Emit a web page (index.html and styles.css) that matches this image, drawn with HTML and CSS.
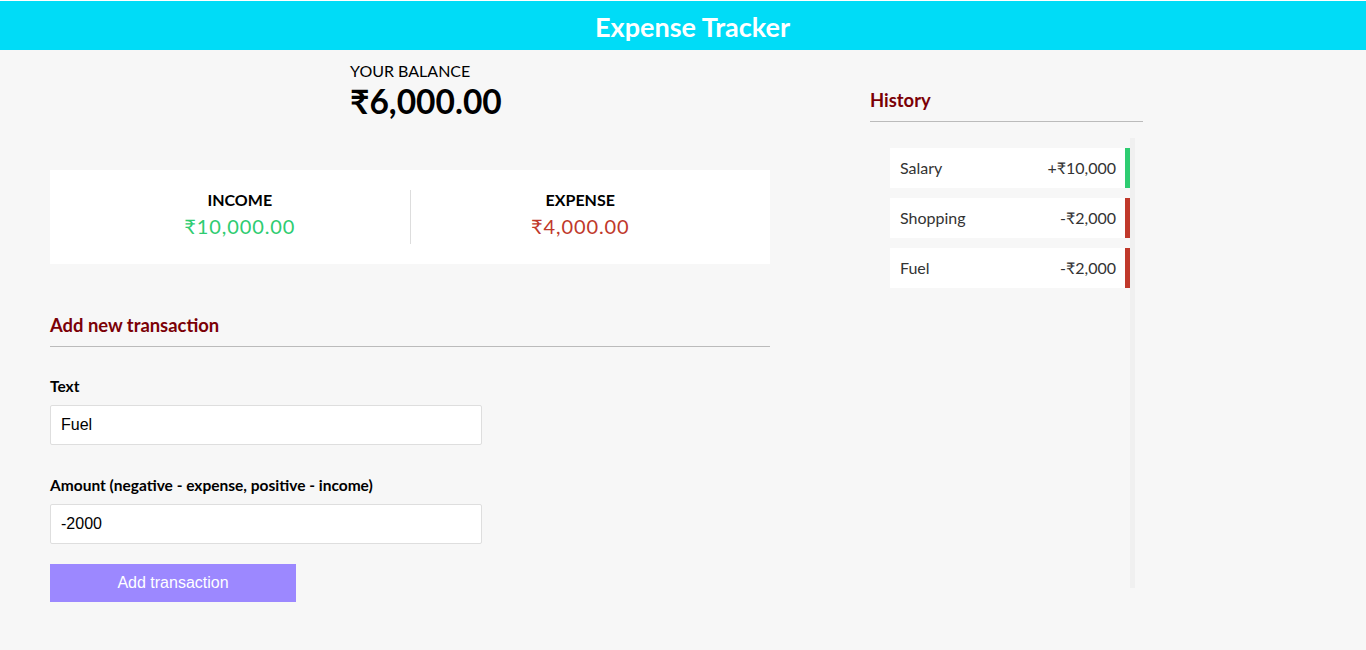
FILE: index.html
```html
<!DOCTYPE html>
<html>
<head>
<meta charset="utf-8">
<link rel="stylesheet" href="styles.css">
</head>
<body>
<header class="topbar"><h1 class="title">Expense Tracker</h1></header>
<main class="layout">
  <section class="left">
    <div class="balance">
      <h4 class="balance-label">YOUR BALANCE</h4>
      <div class="balance-amount">₹6,000.00</div>
    </div>
    <div class="inc-exp">
      <div class="ie-col">
        <h4 class="ie-label">INCOME</h4>
        <p class="money plus">₹10,000.00</p>
      </div>
      <div class="ie-col">
        <h4 class="ie-label">EXPENSE</h4>
        <p class="money minus">₹4,000.00</p>
      </div>
    </div>
    <h3 class="section-title">Add new transaction</h3>
    <form class="form">
      <div class="form-control">
        <label class="label">Text</label>
        <input class="input" type="text" value="Fuel">
      </div>
      <div class="form-control amount-control">
        <label class="label">Amount (negative - expense, positive - income)</label>
        <input class="input" type="text" value="-2000">
      </div>
      <button class="btn" type="button">Add transaction</button>
    </form>
  </section>
  <section class="right">
    <h3 class="section-title">History</h3>
    <ul class="list">
      <li class="item plus-item"><span>Salary</span><span>+₹10,000</span></li>
      <li class="item minus-item"><span>Shopping</span><span>-₹2,000</span></li>
      <li class="item minus-item"><span>Fuel</span><span>-₹2,000</span></li>
    </ul>
  </section>
</main>
</body>
</html>
```
FILE: styles.css
```css
* { box-sizing: border-box; }
html, body { margin: 0; padding: 0; }
body {
  background: #f7f7f7;
  font-family: Lato, "Open Sans", sans-serif;
  color: #000;
  border-top: 1px solid #fff;
}
.topbar {
  background: #00dcf7;
  height: 49px;
  display: flex;
  align-items: center;
  justify-content: center;
  padding-left: 19px;
}
.title {
  margin: 0;
  color: #fff;
  font-family: Lato, sans-serif;
  font-weight: 700;
  font-size: 27px;
  line-height: 30px;
  padding-top: 2px;
}
.layout {
  display: flex;
  padding-left: 50px;
}
.left { width: 720px; }
.right { width: 273px; margin-left: 100px; padding-top: 38px; }
.balance { margin-left: 300px; padding-top: 11px; }
.balance-label {
  margin: 0;
  font-size: 16px;
  font-weight: 400;
  line-height: 20px;
}
.balance-amount {
  font-size: 33.5px;
  font-weight: 700;
  line-height: 40px;
}
.inc-exp {
  margin-top: 49px;
  background: #fff;
  height: 94px;
  display: flex;
  align-items: center;
  padding: 0 20px;
}
.ie-col {
  flex: 1;
  text-align: center;
  height: 54px;
}
.ie-col:first-child { border-right: 1px solid #ddd; }
.ie-label {
  margin: 0;
  font-size: 16px;
  font-weight: 700;
  line-height: 20px;
}
.money {
  margin: 4px 0 0;
  font-size: 20px;
  line-height: 24px;
  letter-spacing: 0.9px;
}
.plus { color: #2ecc71; }
.minus { color: #c0392b; }
.section-title {
  margin: 0;
  color: #7b0006;
  font-size: 18.4px;
  font-weight: 700;
  line-height: 24px;
  padding-bottom: 9px;
  border-bottom: 1px solid #bbb;
}
.left .section-title { margin-top: 49px; }
.form {
  display: flex;
  flex-direction: column;
  align-items: flex-start;
  padding-top: 29px;
}
.form-control { margin-bottom: 20px; }
.amount-control { margin-top: 10px; }
.label {
  display: block;
  font-size: 15.5px;
  font-weight: 700;
  line-height: 20px;
  margin: 0 0 9px;
}
.input {
  display: block;
  width: 432px;
  height: 40px;
  border: 1px solid #dedede;
  border-radius: 2px;
  background: #fff;
  padding: 0 10px;
  font-family: "Liberation Sans", Arial, sans-serif;
  font-size: 16px;
  color: #000;
}
.btn {
  display: block;
  width: 246px;
  height: 38px;
  border: 0;
  background: #9c88ff;
  color: #fff;
  font-family: "Liberation Sans", Arial, sans-serif;
  font-size: 16px;
}
.list {
  list-style: none;
  margin: 16px 0 0 20px;
  padding: 10px 0 0;
  width: 245px;
  height: 450px;
  border-right: 5px solid #f0f0f0;
}
.item {
  background: #fff;
  height: 40px;
  margin-bottom: 10px;
  display: flex;
  align-items: center;
  justify-content: space-between;
  padding: 0 9px 2px 10px;
  font-size: 16px;
  color: #333;
}
.plus-item { border-right: 5px solid #2ecc71; }
.minus-item { border-right: 5px solid #c0392b; }
```
